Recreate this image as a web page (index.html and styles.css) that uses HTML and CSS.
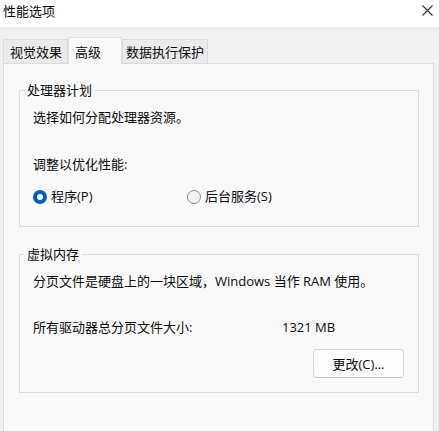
FILE: index.html
```html
<!DOCTYPE html>
<html lang="zh-CN">
<head>
  <meta charset="UTF-8">
  <title>性能选项</title>
  <meta name="viewport" content="width=device-width, initial-scale=1.0">
  <link rel="stylesheet" href="styles.css">
</head>
<body>

<div class="window">
  <div class="titlebar">
    <span class="title">性能选项</span>
    <svg class="close" width="11" height="11" viewBox="0 0 11 11">
      <path d="M0.5 0.5 L10.5 10.5 M10.5 0.5 L0.5 10.5" stroke="#333" stroke-width="1.1" fill="none"/>
    </svg>
  </div>

  <div class="content">
    <div class="tabs">
      <div class="tab tab-visual">视觉效果</div>
      <div class="tab tab-active">高级</div>
      <div class="tab tab-dep">数据执行保护</div>
    </div>

    <div class="panel">
      <fieldset class="group group-cpu">
        <legend>处理器计划</legend>
        <p class="line">选择如何分配处理器资源。</p>
        <p class="line gap-lg">调整以优化性能:</p>
        <div class="radio-row">
          <label class="radio-item first">
            <span class="radio checked"></span>
            <span>程序(P)</span>
          </label>
          <label class="radio-item">
            <span class="radio"></span>
            <span>后台服务(S)</span>
          </label>
        </div>
      </fieldset>

      <fieldset class="group group-mem">
        <legend>虚拟内存</legend>
        <p class="line">分页文件是硬盘上的一块区域，Windows 当作 RAM 使用。</p>
        <div class="size-row">
          <span class="size-label">所有驱动器总分页文件大小:</span>
          <span>1321 MB</span>
        </div>
        <div class="btn-row">
          <button class="change-btn">更改(C)...</button>
        </div>
      </fieldset>
    </div>
  </div>
</div>

</body>
</html>
```

FILE: styles.css
```css
body {
  margin: 0;
  font-family: "Open Sans", "Noto Sans CJK SC", sans-serif;
  font-size: 13px;
  line-height: 17px;
  color: #0a0a0a;
  background: #f0f0f0;
  overflow: hidden;
}

.window {
  width: 439px;
  height: 431px;
  overflow: hidden;
}

.titlebar {
  height: 27px;
  background-color: #fff;
  display: flex;
  justify-content: space-between;
  align-items: flex-start;
  padding: 3px 6px 0 3px;
  box-sizing: border-box;
}

.title {
  font-size: 13px;
}

.close {
  margin-top: 2px;
}

.content {
  background-color: #f0f0f0;
  padding-top: 9px;
}

.tabs {
  display: flex;
  align-items: flex-end;
  height: 27px;
  padding-left: 3px;
  position: relative;
  z-index: 1;
}

.tab {
  height: 24px;
  line-height: 24px;
  font-size: 13px;
  box-sizing: border-box;
  background-color: #ebebeb;
  border: 1px solid #dadada;
  border-bottom: none;
}

.tab-visual {
  width: 65px;
  padding-left: 6px;
}

.tab-active {
  width: 54px;
  height: 27px;
  line-height: 28px;
  padding-left: 6px;
  background-color: #f9f9f9;
  border-color: #e0e0e0;
  margin-bottom: -1px;
}

.tab-dep {
  width: 86px;
  padding-left: 3px;
}

.panel {
  margin-left: 3px;
  width: 431px;
  height: 400px;
  box-sizing: border-box;
  background-color: #f9f9f9;
  border: 1px solid #dadada;
  padding-top: 1px;
}

.group {
  margin: 0 0 0 15px;
  width: 400px;
  box-sizing: border-box;
  border: 1px solid #dcdcdc;
  padding: 0 14px 0 13px;
  min-inline-size: 0;
}

.group legend {
  padding: 0 3px;
  margin-left: -9px;
}

.group-cpu {
  margin-top: 17px;
  padding-top: 10px;
  padding-bottom: 21px;
}

.group-mem {
  margin-top: 19px;
  padding-top: 10px;
  padding-bottom: 14px;
}

.line {
  margin: 0;
}

.gap-lg {
  margin-top: 30px;
}

.radio-row {
  display: flex;
  margin-top: 15px;
}

.radio-item {
  display: flex;
  align-items: center;
  gap: 4px;
}

.radio-item.first {
  width: 154px;
}

.radio {
  width: 14px;
  height: 14px;
  box-sizing: border-box;
  border-radius: 50%;
  border: 1px solid #8a8a8a;
  background-color: #f3f3f3;
}

.radio.checked {
  border: 4px solid #005fb8;
  background-color: #fff;
}

.size-row {
  display: flex;
  margin-top: 29px;
}

.size-label {
  width: 249px;
}

.btn-row {
  display: flex;
  justify-content: flex-end;
  margin-top: 13px;
}

.change-btn {
  width: 91px;
  height: 29px;
  font-family: inherit;
  font-size: 13px;
  color: #0a0a0a;
  background-color: #fdfdfd;
  border: 1px solid #d5d5d5;
  border-bottom-color: #c4c4c4;
  border-radius: 4px;
  padding: 0;
}
```
